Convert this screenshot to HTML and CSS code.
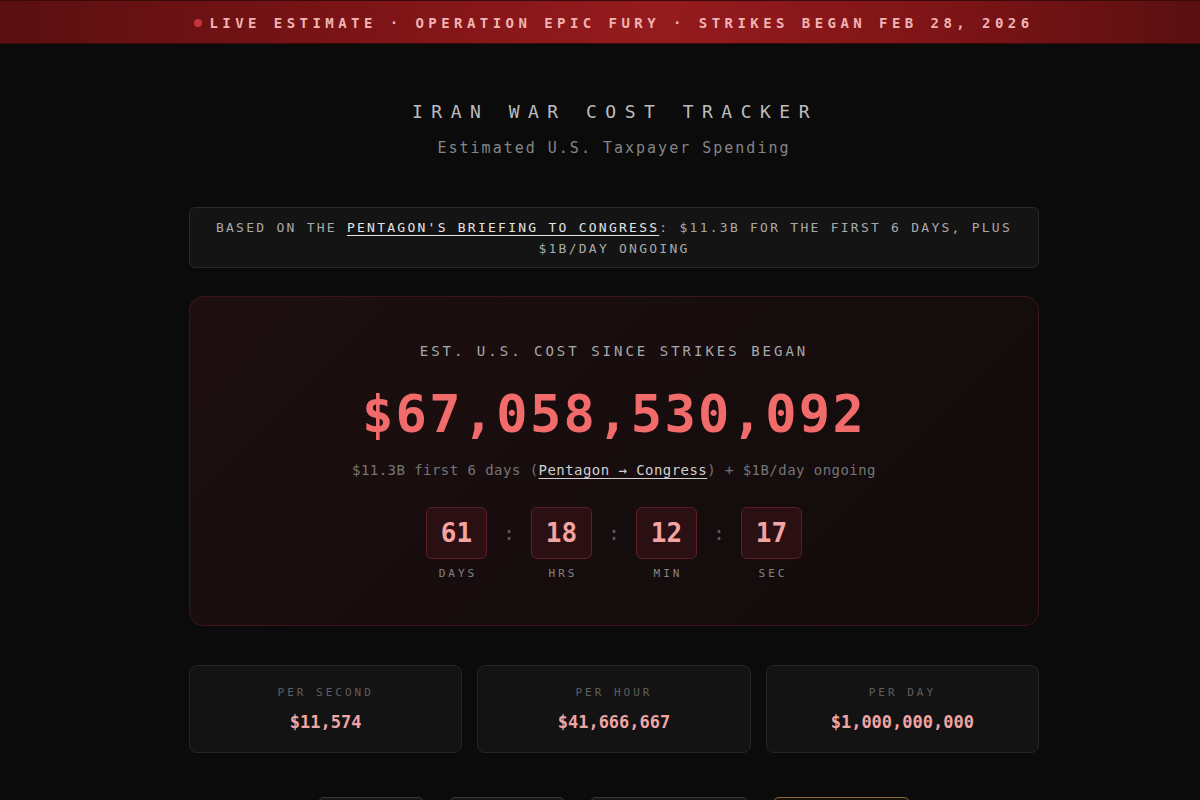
FILE: index.html
```html
<!DOCTYPE html>
<html lang="en">
<head>
<meta charset="utf-8">
<title>Iran War Cost Tracker</title>
<link rel="stylesheet" href="styles.css">
</head>
<body>
<div class="banner">
  <div class="banner-inner"><span class="dot"></span><span class="banner-text">LIVE ESTIMATE · OPERATION EPIC FURY · STRIKES BEGAN FEB 28, 2026</span></div>
</div>
<main class="page">
  <header class="head">
    <h1 class="title">IRAN WAR COST TRACKER</h1>
    <p class="subtitle">Estimated U.S. Taxpayer Spending</p>
  </header>

  <div class="info">BASED ON THE <a class="info-link" href="#">PENTAGON'S BRIEFING TO CONGRESS</a>: $11.3B FOR THE FIRST 6 DAYS, PLUS $1B/DAY ONGOING</div>

  <section class="card">
    <div class="card-label">EST. U.S. COST SINCE STRIKES BEGAN</div>
    <div class="total">$67,058,530,092</div>
    <div class="card-sub">$11.3B first 6 days (<a class="sub-link" href="#">Pentagon → Congress</a>) + $1B/day ongoing</div>
    <div class="countdown">
      <div class="unit"><div class="unit-box">61</div><div class="unit-label">DAYS</div></div>
      <div class="sep">:</div>
      <div class="unit"><div class="unit-box">18</div><div class="unit-label">HRS</div></div>
      <div class="sep">:</div>
      <div class="unit"><div class="unit-box">12</div><div class="unit-label">MIN</div></div>
      <div class="sep">:</div>
      <div class="unit"><div class="unit-box">17</div><div class="unit-label">SEC</div></div>
    </div>
  </section>

  <section class="stats">
    <div class="stat"><div class="stat-label">PER SECOND</div><div class="stat-value">$11,574</div></div>
    <div class="stat"><div class="stat-label">PER HOUR</div><div class="stat-value">$41,666,667</div></div>
    <div class="stat"><div class="stat-label">PER DAY</div><div class="stat-value">$1,000,000,000</div></div>
  </section>

  <nav class="tabs">
    <a class="tab tab-a" href="#" aria-label="Sources"></a>
    <a class="tab tab-b" href="#" aria-label="Breakdown"></a>
    <a class="tab tab-c" href="#" aria-label="Comparisons"></a>
    <a class="tab tab-gold" href="#" aria-label="Share"></a>
  </nav>
</main>
</body>
</html>
```
FILE: styles.css
```css
* { box-sizing: border-box; }
html, body { margin: 0; padding: 0; }
body {
  background: #0b0b0b;
  color: #bbb;
  font-family: "DejaVu Sans Mono", "Liberation Mono", monospace;
  height: 800px;
  overflow: hidden;
}
a { color: inherit; }

.banner {
  height: 44px;
  background: linear-gradient(90deg, #5a0f10 0%, #7c1416 30%, #951b1e 55%, #7c1416 80%, #5a0f10 100%);
  border-top: 1px solid #3a0a0a;
  border-bottom: 1px solid #3a0a0a;
  display: flex;
  align-items: center;
  justify-content: center;
  padding-left: 28px;
  padding-top: 2px;
}
.banner-inner { display: flex; align-items: center; gap: 7px; }
.dot {
  width: 8px; height: 8px; border-radius: 50%;
  background: #c8323a;
}
.banner-text {
  font-size: 14px;
  letter-spacing: 4.45px;
  color: #f2b3b3;
  font-weight: bold;
  line-height: 18px;
}

.page {
  width: 878px;
  margin: 0 auto;
  padding-left: 28px;
}

.head { text-align: center; margin-top: 57px; }
.title {
  margin: 0;
  font-size: 18px;
  font-weight: normal;
  letter-spacing: 8.5px;
  line-height: 22px;
  color: #bdbdbd;
  padding-left: 2px;
}
.subtitle {
  margin: 15px 0 0;
  font-size: 15px;
  line-height: 20px;
  letter-spacing: 2px;
  color: #858585;
}

.info {
  margin-top: 49px;
  border: 1px solid #2a2a2a;
  background: #141414;
  border-radius: 6px;
  padding: 9px 20px 8px;
  text-align: center;
  font-size: 13px;
  line-height: 21px;
  letter-spacing: 2.25px;
  color: #a9a9a9;
}
.info-link { color: #e4e4e4; text-decoration: underline; text-underline-offset: 3px; }

.card {
  margin-top: 28px;
  border: 1px solid #3d1519;
  border-radius: 14px;
  background: linear-gradient(135deg, #1e0f10 0%, #170d0e 50%, #110b0b 100%);
  padding: 45px 20px 44px;
  text-align: center;
}
.card-label {
  font-size: 14px;
  line-height: 18px;
  letter-spacing: 3px;
  color: #a8a8a8;
}
.total {
  margin-top: 24px;
  font-size: 52px;
  line-height: 60px;
  font-weight: bold;
  letter-spacing: 2.3px;
  color: #f26b6b;
}
.card-sub {
  margin-top: 17px;
  font-size: 14px;
  line-height: 18px;
  letter-spacing: 0.45px;
  color: #757575;
}
.sub-link { color: #cfcfcf; text-decoration: underline; text-underline-offset: 3px; }

.countdown {
  margin-top: 28px;
  display: flex;
  justify-content: center;
  align-items: flex-start;
  gap: 13px;
}
.unit { display: flex; flex-direction: column; align-items: center; }
.unit-box {
  width: 61px; height: 52px;
  border: 1px solid #5e1f24;
  background: #2a1012;
  border-radius: 6px;
  display: flex; align-items: center; justify-content: center;
  font-size: 26px;
  font-weight: bold;
  color: #f5a4a4;
}
.unit-label {
  margin-top: 8px;
  font-size: 11px;
  line-height: 14px;
  letter-spacing: 3px;
  padding-left: 3px;
  color: #848484;
}
.sep {
  width: 18px;
  height: 52px;
  display: flex; align-items: center; justify-content: center;
  font-size: 20px;
  color: #5a5a5a;
}

.stats {
  margin-top: 39px;
  display: grid;
  grid-template-columns: repeat(3, 1fr);
  gap: 15px;
}
.stat {
  height: 88px;
  border: 1px solid #262626;
  background: #131313;
  border-radius: 8px;
  padding-top: 20px;
  text-align: center;
}
.stat-label {
  font-size: 11px;
  line-height: 14px;
  letter-spacing: 3px;
  color: #5f5f5f;
}
.stat-value {
  margin-top: 11px;
  font-size: 17px;
  line-height: 22px;
  font-weight: bold;
  color: #f0a5a5;
}

.tabs {
  margin-top: 44px;
  display: flex;
  justify-content: center;
  gap: 25px;
}
.tab {
  display: block;
  height: 36px;
  border: 1px solid #3a3a3a;
  border-radius: 6px;
  background: #161616;
}
.tab-a { width: 106px; }
.tab-b { width: 116px; }
.tab-c { width: 158px; }
.tab-gold { width: 137px; border-color: #8a6a2c; background: #1a150c; }
```
